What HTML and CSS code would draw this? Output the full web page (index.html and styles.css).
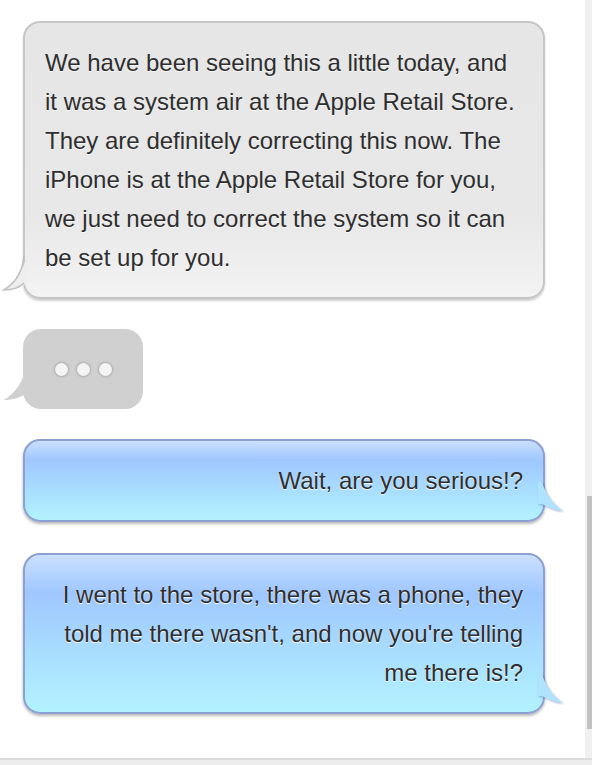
FILE: index.html
```html
<!DOCTYPE html>
<html lang="en">
<head>
<meta charset="utf-8">
<title>Chat</title>
<link rel="stylesheet" href="styles.css">
</head>
<body>
<div class="frame">
  <div class="viewport">
    <main class="chat">
      <div class="bubble them">
        <svg class="tail tail-left" width="30" height="50" viewBox="0 0 30 50">
          <path class="tail-fill-gray" d="M27 5 C23 22 15 33 4 40 C12 40 20 38 27 33 Z"/>
          <path class="tail-stroke-gray" d="M24 5 C23 22 15 33 4 40 C12 40 19 38 24 33"/>
        </svg>
        <p>We have been seeing this a little today, and it was a system air at the Apple Retail Store. They are definitely correcting this now. The iPhone is at the Apple Retail Store for you, we just need to correct the system so it can be set up for you.</p>
      </div>
      <div class="typing">
        <svg class="tail tail-left" width="30" height="50" viewBox="0 0 30 50">
          <path class="tail-fill-typing" d="M27 6 C23 22 15 33 4 40 C12 40 20 38 27 33 Z"/>
        </svg>
        <span class="dot"></span><span class="dot"></span><span class="dot"></span>
      </div>
      <div class="bubble me">
        <svg class="tail tail-right" width="30" height="50" viewBox="0 0 30 50">
          <path class="tail-fill-blue" d="M0 9 L4 9 C8 23 16 32 25 38 C17 37 9 34 4 31 L0 31 Z"/>
        </svg>
        <p>Wait, are you serious!?</p>
      </div>
      <div class="bubble me">
        <svg class="tail tail-right" width="30" height="50" viewBox="0 0 30 50">
          <path class="tail-fill-blue" d="M0 9 L4 9 C8 23 16 32 25 38 C17 37 9 34 4 31 L0 31 Z"/>
        </svg>
        <p>I went to the store, there was a phone, they told me there wasn't, and now you're telling me there is!?</p>
      </div>
    </main>
    <div class="vscroll"><div class="vthumb"></div></div>
  </div>
  <div class="hscroll"></div>
</div>
</body>
</html>
```
FILE: styles.css
```css
* { box-sizing: border-box; }
html, body {
  margin: 0;
  padding: 0;
  background: #ffffff;
  font-family: "Liberation Sans", Arial, sans-serif;
}
.frame {
  width: 592px;
  height: 765px;
  display: flex;
  flex-direction: column;
  overflow: hidden;
}
.viewport {
  flex: 1;
  display: flex;
  min-height: 0;
}
.chat {
  flex: 1;
  display: flex;
  flex-direction: column;
  align-items: flex-start;
  gap: 30px;
  padding: 21px 0 0 23px;
}
.bubble {
  position: relative;
  width: 522px;
  border-radius: 17px;
  padding: 20px;
}
.bubble p {
  margin: 0;
  font-size: 24px;
  line-height: 39px;
  color: #2e2e2e;
  position: relative;
}
.them {
  border: 2px solid #c6c6c6;
  background: linear-gradient(#e6e6e6 0%, #e8e8e8 70%, #f3f3f3 100%);
  box-shadow: 0 2px 2px rgba(0, 0, 0, 0.18);
}
.them p {
  text-shadow: 0 1px 0 rgba(255, 255, 255, 0.7);
}
.me {
  border: 2px solid #8da0d2;
  background: linear-gradient(#cbe0ff 0%, #9fc7ff 24%, #a8dcff 60%, #b2f3ff 100%);
  box-shadow: 0 2px 3px rgba(0, 0, 0, 0.28);
}
.me p {
  text-align: right;
  text-shadow: 0 1px 1px #ffffff;
}
.bubble.me:last-child { margin-top: 1px; }
.typing {
  position: relative;
  width: 120px;
  height: 80px;
  border-radius: 18px;
  background: #d0d0d0;
  display: flex;
  align-items: center;
  justify-content: center;
  gap: 9px;
}
.dot {
  width: 13px;
  height: 13px;
  border-radius: 50%;
  background: #f4f4f4;
  box-shadow: 0 0 2px 1px rgba(150, 150, 150, 0.6);
  position: relative;
}
.tail {
  position: absolute;
  bottom: -1px;
  overflow: visible;
}
.tail-left { left: -23px; }
.bubble .tail-left { left: -25px; bottom: -3px; }
.tail-right {
  right: -25px;
  bottom: -3px;
  filter: drop-shadow(1px 1px 1px rgba(60, 80, 130, 0.45));
}
.tail-fill-gray { fill: #eeeeee; }
.tail-stroke-gray { fill: none; stroke: #c0c0c0; stroke-width: 1.6; }
.tail-fill-typing { fill: #d0d0d0; }
.tail-fill-blue { fill: #aee4ff; }
.vscroll {
  width: 7px;
  background: #f0f0f0;
  display: flex;
  flex-direction: column;
  align-items: flex-end;
  padding-top: 496px;
}
.vthumb {
  width: 5px;
  height: 233px;
  background: #c1c1c1;
}
.hscroll {
  height: 7px;
  background: #ededed;
  border-top: 2px solid #dcdcdc;
}
```
